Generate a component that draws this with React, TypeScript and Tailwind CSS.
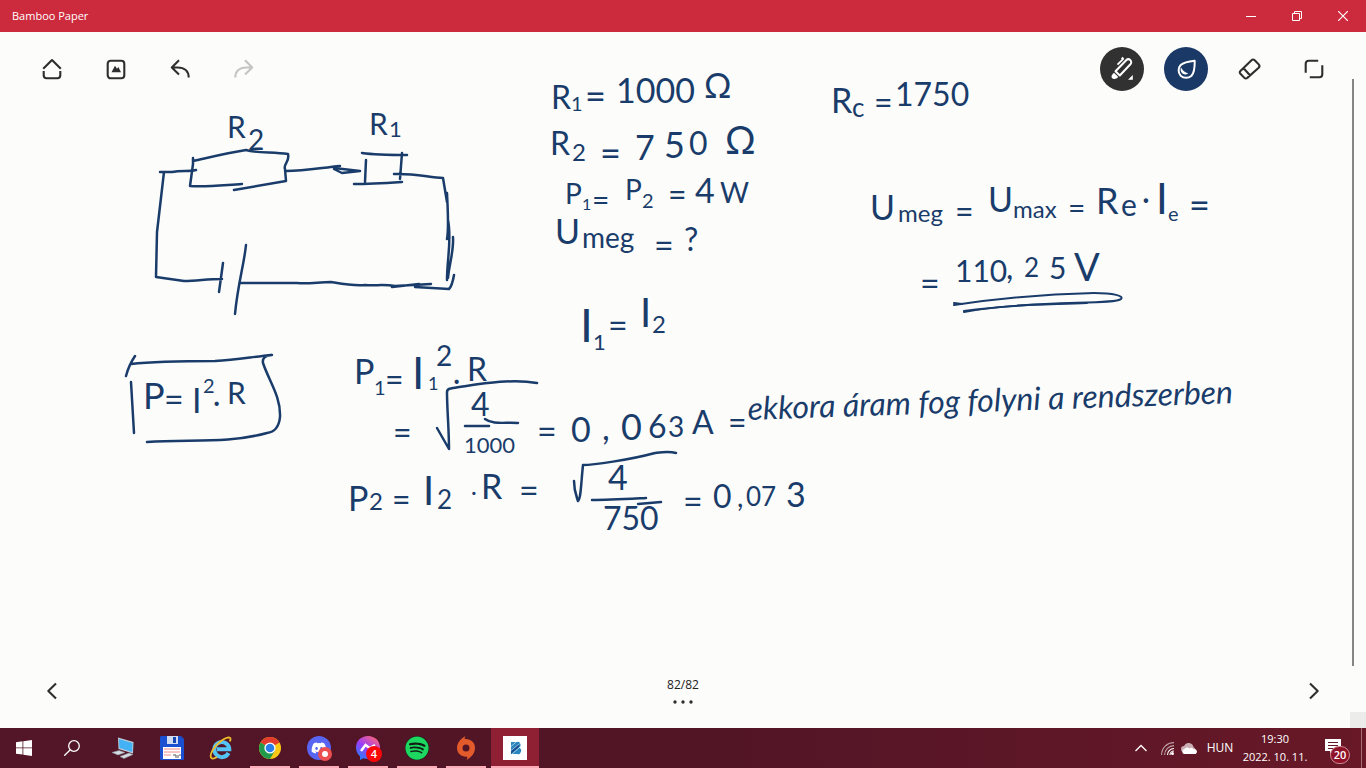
import type { ReactNode } from "react";
import { FaDiscord, FaSpotify } from "react-icons/fa";

type Mark = [x: number, y: number, size: number, text: string];

// One entry per handwritten line, each mark placed on the free canvas.
const notes: Mark[][] = [
  [[227, 138, 30, "R"], [248, 150, 28, "2"]],
  [[369, 135, 30, "R"], [389, 137, 22, "1"]],

  [[551, 109, 32, "R"], [571, 111, 20, "1"], [585, 109, 36, "="], [616, 103, 34, "1000"], [704, 98, 34, "Ω"]],
  [[550, 155, 32, "R"], [572, 161, 24, "2"], [600, 166, 36, "="], [635, 160, 34, "7"], [664, 158, 36, "5"], [689, 155, 32, "0"], [725, 154, 38, "Ω"]],
  [[565, 204, 28, "P"], [582, 210, 16, "1"], [592, 211, 30, "="], [625, 200, 28, "P"], [642, 208, 20, "2"], [668, 206, 32, "="], [695, 203, 34, "4"], [720, 203, 28, "W"]],
  [[555, 244, 34, "U"], [582, 248, 28, "meg"], [654, 258, 34, "="], [684, 251, 32, "?"]],
  [[580, 342, 46, "I"], [593, 350, 22, "1"], [608, 338, 34, "="], [640, 327, 40, "I"], [652, 333, 24, "2"]],

  [[831, 113, 34, "R"], [852, 117, 26, "c"], [874, 114, 32, "="], [895, 106, 32, "1750"]],
  [[870, 220, 34, "U"], [898, 222, 24, "meg"], [955, 223, 32, "="], [988, 212, 34, "U"], [1013, 218, 24, "max"], [1068, 219, 30, "="], [1096, 214, 36, "R"], [1121, 216, 30, "e"], [1142, 210, 30, "·"], [1156, 214, 42, "I"], [1168, 221, 20, "e"], [1189, 218, 36, "="]],
  [[920, 296, 34, "="], [955, 282, 30, "110"], [1006, 279, 32, ","], [1024, 277, 26, "2"], [1049, 279, 30, "5"], [1074, 281, 38, "V"]],

  [[143, 409, 36, "P"], [164, 412, 34, "="], [192, 413, 34, "I"], [203, 393, 20, "2"], [213, 412, 28, "·"], [227, 404, 30, "R"]],

  [[354, 384, 34, "P"], [374, 395, 20, "1"], [385, 391, 32, "="], [412, 389, 44, "I"], [428, 390, 18, "1"], [436, 366, 28, "2"], [453, 390, 28, "·"], [467, 381, 32, "R"]],
  [[393, 444, 32, "="], [471, 416, 32, "4"], [464, 453, 22, "1000"], [537, 444, 34, "="], [571, 442, 34, "0"], [602, 440, 34, ","], [621, 440, 36, "0"], [648, 438, 32, "6"], [668, 437, 28, "3"], [692, 434, 32, "A"], [728, 434, 32, "="]],
  [[348, 511, 34, "P"], [369, 510, 24, "2"], [392, 511, 32, "="], [423, 505, 40, "I"], [437, 509, 26, "2"], [471, 500, 22, "·"], [481, 499, 34, "R"], [519, 503, 34, "="], [608, 490, 34, "4"], [603, 530, 32, "750"], [683, 514, 34, "="], [713, 508, 32, "0"], [737, 507, 28, ","], [746, 506, 26, "07"], [786, 507, 34, "3"]],
];

const strokes = [
  // circuit
  "M193 158v6l-3 22c18 1 34-1 52-2M193 161c18-4 34-8 53-11 10 3 26 2 42 4 2 8-5 10-3 15l1 12-52 9",
  "M160 172h12c10-2 16 0 24-2M164 172l-7 60-1 45 28 4c14 0 22-2 38-2M223 263l-4 29",
  "M246 245c-2 20-8 38-11 69M241 283c18 0 36 0 56 0 12 1 22-1 34-1 12 2 22 4 34 3 10 1 18-1 30 1l36-2M392 287l27-3M415 287l34 2c3-3 4-8 5-14",
  "M286 171c18 0 34-3 54-5M334 168l26 3-18 2-8-4M362 153c14 2 28 2 45 2M366 160l-1 22M354 184c16 0 32-1 48-2M402 153l-2 26M394 174c18-1 34 3 49 4l4 24M447 193c1 22 2 36 0 46M448 220c4 20-1 38-1 60M453 237c1 14-4 28-5 41",
  // frame around the power formula
  "M126 376c2-8 5-14 9-20M131 364c26-3 52-3 84-3 22-1 36-4 57-6-6 0-10 3-9 8 6 18 18 34 17 54-1 10-5 15-13 16-40 11-76 6-120 9M131 382l3 51",
  // square roots and fraction bars
  "M437 428l12 21c0-20-2-40-2-57 0-4 3-3 6-4 22-3 56-10 84-5M465 426h24M485 419c8 6 20 3 33 4",
  "M574 481c0 10 2 14 4 20 3-2 3-18 5-36 10 0 46-5 72-12 8-1 14-2 21 0M592 500c16 0 34-1 54-2M638 504l23-2",
];

const thinStrokes = [
  "M954 305c40-6 88-11 140-12 20 0 30 3 27 6-6 6-80 1-157 12",
  "M954 303l8 1M964 312c44-8 80-7 123-9",
];

function Ink() {
  return (
    <svg
      viewBox="0 32 1366 696"
      className="absolute inset-0 w-full h-full pointer-events-none font-['Lato','Open_Sans',sans-serif]"
      fill="none"
      stroke="#1a3c6a"
      strokeLinecap="round"
      strokeLinejoin="round"
    >
      {strokes.map((d) => (
        <path key={d} d={d} strokeWidth="2.5" />
      ))}
      {thinStrokes.map((d) => (
        <path key={d} d={d} strokeWidth="2" />
      ))}
      <g fill="#1a3c6a" stroke="none">
        {notes.map((line, i) => (
          <text key={i}>
            {line.map(([x, y, size, text]) => (
              <tspan key={`${x}-${y}`} x={x} y={y} fontSize={size}>
                {text}
              </tspan>
            ))}
          </text>
        ))}
        <text x="748" y="420" fontSize="32" fontStyle="italic" transform="rotate(-2 748 420)">
          ekkora áram fog folyni a rendszerben
        </text>
      </g>
    </svg>
  );
}

function ToolButton({ label, className = "", children }: { label: string; className?: string; children: ReactNode }) {
  return (
    <button aria-label={label} className={`w-11 h-11 rounded-full flex items-center justify-center ${className}`}>
      {children}
    </button>
  );
}

function LineIcon({ children, color = "#2e2e2e" }: { children: ReactNode; color?: string }) {
  return (
    <svg width="24" height="24" viewBox="0 0 24 24" fill="none" stroke={color} strokeWidth="2.1" strokeLinejoin="round">
      {children}
    </svg>
  );
}

function Toolbar() {
  return (
    <div className="flex justify-between px-[30px] pt-[15px]">
      <div className="flex gap-5">
        <ToolButton label="Home">
          <LineIcon>
            <path d="M3.2 11.8 12 3l8.8 8.8M3.7 14v4.2a3 3 0 0 0 3 3h10.6a3 3 0 0 0 3-3V14" />
          </LineIcon>
        </ToolButton>
        <ToolButton label="Insert picture">
          <LineIcon>
            <rect x="3.7" y="3.7" width="16.6" height="17.6" rx="3" />
            <path d="m7.5 15.2 3.5-6.4 2 3 1.4-1.8 2.600 5.200z" fill="#2e2e2e" stroke="none" />
          </LineIcon>
        </ToolButton>
        <ToolButton label="Undo">
          <LineIcon>
            <path d="M11 3.3 3.8 10.5l7.2 7M4 10.500h5.500c7.500 0 11.200 4.200 11.200 10" />
          </LineIcon>
        </ToolButton>
        <ToolButton label="Redo">
          <LineIcon color="#c4c4c4">
            <path d="m13 3.3 7.200 7.200-7.200 7M20 10.500h-5.500c-7.500 0-11.200 4.200-11.200 10" />
          </LineIcon>
        </ToolButton>
      </div>
      <div className="flex gap-5">
        <ToolButton label="Pen" className="bg-[#313131]">
          <svg width="44" height="44" viewBox="0 0 44 44" fill="none" stroke="#fff" strokeWidth="2" strokeLinejoin="round">
            <path d="M15.500 24.300 26.200 13.200a2.900 2.900 0 0 1 4.200 4.100L19.800 28.500z" />
            <path d="m17.500 17.700 6.300-6.400M21.500 12l1.700-1.600" strokeWidth="1.700" />
            <path d="m14 25.800 4.300 4.300c-1.600 1.700-3.700 2.300-5.300 1.600-1.900-.8-2.300-3.200 1-5.900z" fill="#fff" stroke="none" />
            <path d="M28 32.800l4.800-4.800v4.800z" fill="#fff" stroke="none" />
          </svg>
        </ToolButton>
        <ToolButton label="Color" className="bg-[#1a3966]">
          <svg width="44" height="44" viewBox="0 0 44 44" fill="none" stroke="#fff" strokeWidth="2" strokeLinejoin="round">
            <path d="M30.700 13.700c-6 .6-11.300 1.800-14 4.300a7.900 7.900 0 0 0 0 10.700 7.900 7.900 0 0 0 10.800 0c2.500-2.700 3.300-8.500 3.200-15z" />
            <path d="M17 20.500c-1.400 3.300.8 6.700 4.200 6.900 1.300 0 2.300-.4 3-1-3.200-.8-5.700-2.900-7.200-5.900z" fill="#fff" stroke="none" />
          </svg>
        </ToolButton>
        <ToolButton label="Eraser">
          <LineIcon>
            <path d="M13.500 3.200a2.400 2.400 0 0 1 3.200 0l4 4.200a2.400 2.400 0 0 1 0 3.300L9.300 20.900a2 2 0 0 1-2.900 0l-4-4.100a2 2 0 0 1 0-2.900zM5.400 11l6.500 7.200" />
          </LineIcon>
        </ToolButton>
        <ToolButton label="Full screen">
          <LineIcon>
            <path d="M3.700 15.800V6.700a3 3 0 0 1 3-3h9.500M20.300 8.200v9.100a3 3 0 0 1-3 3H7.800" />
          </LineIcon>
        </ToolButton>
      </div>
    </div>
  );
}

function TitleBar() {
  return (
    <header className="h-8 shrink-0 bg-[#cc2b3d] text-white flex items-center justify-between">
      <h1 className="text-[11px] pl-3">Bamboo Paper</h1>
      <div className="flex h-full">
        <button aria-label="Minimize" className="w-[46px] flex items-center justify-center">
          <svg width="10" height="10" stroke="#fff">
            <path d="M0 5.500h10" />
          </svg>
        </button>
        <button aria-label="Restore" className="w-[46px] flex items-center justify-center">
          <svg width="10" height="10" fill="none" stroke="#fff">
            <path d="M.5 2.500h7v7h-7zM2.500 2V.5h7v7H8" />
          </svg>
        </button>
        <button aria-label="Close" className="w-[46px] flex items-center justify-center">
          <svg width="10" height="10" stroke="#fff" strokeWidth="1.200">
            <path d="m0 0 10 10M10 0 0 10" />
          </svg>
        </button>
      </div>
    </header>
  );
}

function PageNav() {
  return (
    <div className="mt-auto flex items-center justify-between px-[30px] pb-[15px]">
      <ToolButton label="Previous page">
        <LineIcon>
          <path d="M16 4.500 8.300 12l7.700 7.500" />
        </LineIcon>
      </ToolButton>
      <button aria-label="Page overview" className="flex flex-col items-center gap-1.5 text-[#222]">
        <span className="text-xs">82/82</span>
        <svg width="22" height="6" fill="#2e2e2e">
          <circle cx="3" cy="3" r="1.700" />
          <circle cx="11" cy="3" r="1.700" />
          <circle cx="19" cy="3" r="1.700" />
        </svg>
      </button>
      <ToolButton label="Next page">
        <LineIcon>
          <path d="m8 4.500 7.700 7.500L8 19.500" />
        </LineIcon>
      </ToolButton>
    </div>
  );
}

/* ── Taskbar ─────────────────────────────────────────── */

const apps: { name: string; state?: "open" | "active"; icon: ReactNode }[] = [
  {
    name: "Remote computer",
    icon: (
      <svg width="24" height="24" viewBox="0 0 24 24">
        <path d="m7 1.500 15.500 4.500-.5 11.500L7.500 13z" fill="#c3cdd8" />
        <path d="m8 3 13.600 4-.4 9L8.400 12z" fill="#42b2f5" />
        <path d="m1 16.500 7-2 6 2-7 2.500zM9 20.500l9-3.500 4 1.500-9 4z" fill="#d5dbe2" stroke="#8d97a3" strokeWidth=".6" />
      </svg>
    ),
  },
  {
    name: "Total Commander",
    icon: (
      <svg width="24" height="24" viewBox="0 0 24 24">
        <path d="M1 0h20l3 3v20a1 1 0 0 1-1 1H1a1 1 0 0 1-1-1V1z" fill="#1a4fd0" />
        <path d="M7 0h11v8H7z" fill="#cfdcf0" />
        <path d="M13 1h3v6h-3z" fill="#1a45b8" />
        <path d="M3 11h18v12H3z" fill="#fff" />
        <path d="M4 13h16M4 16h16M4 19h7" stroke="#ef8a8a" />
        <path d="M13 19h3v3m2-3v3m1-3h2" stroke="#333" fill="none" strokeWidth=".8" />
      </svg>
    ),
  },
  {
    name: "Internet Explorer",
    icon: (
      <svg width="24" height="24" viewBox="0 0 24 24" fill="none">
        <path d="M19.500 17A7.500 7.500 0 1 1 20.300 13.300H8" stroke="#54c4f5" strokeWidth="4" />
        <path d="M3 22.500C-1 20 5 10 12 5c5-3.500 9-4.500 9.500-2.500.3 1-.3 2-.8 3" stroke="#efbd28" strokeWidth="1.800" />
        <path d="M3 22.500c1.500.5 3.500-.5 5-1.500" stroke="#efbd28" strokeWidth="1.800" />
      </svg>
    ),
  },
  {
    name: "Google Chrome",
    state: "open",
    icon: (
      <svg width="24" height="24" viewBox="0 0 24 24">
        <circle cx="12" cy="12" r="11" fill="#fbc816" />
        <path d="M12 12 2.500 6.500A11 11 0 0 1 21.500 6.500z" fill="#e33b2e" />
        <path d="M2.500 6.500A11 11 0 0 0 12 23l5-8.500L12 12z" fill="#229a4c" />
        <circle cx="12" cy="12" r="5.600" fill="#fff" />
        <circle cx="12" cy="12" r="4.300" fill="#2b7de9" />
      </svg>
    ),
  },
  {
    name: "Discord",
    state: "open",
    icon: (
      <span className="relative w-6 h-6 rounded-full bg-[#5865f2] flex items-center justify-center">
        <FaDiscord size={16} color="#fff" />
        <svg width="14" height="14" className="absolute -right-px -bottom-px">
          <circle cx="7" cy="7" r="7" fill="#ed4f50" />
          <circle cx="7" cy="7" r="3" fill="#fff" />
        </svg>
      </span>
    ),
  },
  {
    name: "Messenger",
    state: "open",
    icon: (
      <span className="relative w-6 h-6">
        <svg width="24" height="24" viewBox="0 0 24 24">
          <defs>
            <linearGradient id="messenger" x1=".1" y1="1" x2=".8" y2="0">
              <stop offset="0" stopColor="#1688ff" />
              <stop offset=".5" stopColor="#9b3dfb" />
              <stop offset="1" stopColor="#ff6578" />
            </linearGradient>
          </defs>
          <path d="M12 0C5 0 0 5 0 11.600c0 3.500 1.400 6.500 4 8.700V24l3.500-1.700c1.400.5 3 .7 4.500.7 7 0 12-4.800 12-11.400S19 0 12 0z" fill="url(#messenger)" />
          <path d="m5 15 4.500-6 4 3 5.500-3" stroke="#fff" strokeWidth="2.400" fill="none" />
        </svg>
        <span className="absolute left-2.5 top-2.5 w-4 h-4 rounded-full bg-[#fa0808] text-white text-[11px] leading-4 font-semibold text-center">
          4
        </span>
      </span>
    ),
  },
  {
    name: "Spotify",
    state: "open",
    icon: (
      <span className="rounded-full bg-[#101c14]">
        <FaSpotify size={24} color="#1ed760" />
      </span>
    ),
  },
  {
    name: "Origin",
    state: "open",
    icon: (
      <svg width="24" height="24" viewBox="0 0 24 24">
        <path
          fillRule="evenodd"
          d="M11.500 0c-.8 1.200-1 2-.7 3.100C16.500 2.600 21 6.500 21 12c0 5.500-4 9.500-8.500 12 .8-1.400 1-2.200.7-3.300C7.500 21.200 3 17.500 3 12 3 6.500 7 2.500 11.500 0zM12 8.500a3.500 3.500 0 1 0 0 7 3.500 3.500 0 0 0 0-7z"
          fill="#e35a2b"
        />
      </svg>
    ),
  },
  {
    name: "Bamboo Paper",
    state: "active",
    icon: (
      <svg width="24" height="24" viewBox="0 0 24 24">
        <path d="M0 0h24v24H0z" fill="#fff" />
        <path d="M8 6h6a2.800 2.800 0 0 1 1.500 5.400A3.200 3.200 0 0 1 14 18H8z" fill="#2a86bd" />
        <path d="M8 14l8-7v4l-8 7z" fill="#1a4f92" />
        <path d="M8 10.500 13 6M8 14.500 16.500 7.500M9 18l7.500-6.500" stroke="#bfe6f2" strokeWidth=".8" />
      </svg>
    ),
  },
];

function Taskbar() {
  return (
    <footer className="h-10 shrink-0 flex justify-between bg-linear-to-r from-[#521628] via-[#511526] to-[#681827] text-white">
      <div className="flex">
        <button aria-label="Start" className="w-12 flex items-center justify-center">
          <svg width="16" height="16" viewBox="0 0 16 16" fill="#fff">
            <path d="M0 2.200 6.500 1.300v6.200H0zM7.300 1.200 16 0v7.500H7.300zM0 8.300h6.500v6.300L0 13.700zM7.300 8.300H16V16l-8.700-1.200z" />
          </svg>
        </button>
        <button aria-label="Search" className="w-12 flex items-center justify-center">
          <svg width="16" height="16" viewBox="0 0 16 16" fill="none" stroke="#fff" strokeWidth="1.300">
            <circle cx="10" cy="6" r="5.300" />
            <path d="m6.300 9.700-6 6" />
          </svg>
        </button>
        <div className="flex gap-px pl-[3px]">
          {apps.map((app) => (
            <button
              key={app.name}
              aria-label={app.name}
              className={`relative w-12 flex items-center justify-center ${app.state === "active" ? "bg-[#8f2033]" : ""}`}
            >
              {app.icon}
              {app.state && (
                <span className={`absolute bottom-0 h-0.5 bg-[#fbacb8] ${app.state === "active" ? "inset-x-0" : "inset-x-1"}`} />
              )}
            </button>
          ))}
        </div>
      </div>

      <div className="flex items-center text-xs">
        <button aria-label="Hidden icons" className="w-6 h-full flex items-center justify-center">
          <svg width="12" height="8" fill="none" stroke="#fff" strokeWidth="1.300">
            <path d="m.5 7 5.500-5.500L11.500 7" />
          </svg>
        </button>
        <button aria-label="Network" className="w-7 h-full flex items-center justify-center">
          <svg width="13" height="13" fill="none" stroke="#fff" strokeWidth="1.100">
            <path d="M.6 13C.6 6 6 .6 13 .6M3.600 13C3.600 7.800 7.800 3.600 13 3.600" opacity=".6" />
            <path d="M6.500 13c0-3.600 2.900-6.500 6.500-6.500M9 13c0-2.200 1.800-4 4-4" />
            <circle cx="11.500" cy="11.500" r="1.500" fill="#fff" stroke="none" />
          </svg>
        </button>
        <button aria-label="OneDrive" className="w-4 h-full flex items-center justify-center">
          <svg width="16" height="11" viewBox="0 0 16 11">
            <path d="M3 9a3 3 0 0 1 0-6 5 5 0 0 1 9.500 1A3.500 3.500 0 0 1 13 10z" fill="#cbaeb4" />
            <path d="M3 11a2.600 2.600 0 0 1 .5-5c1-1.500 3.500-2 5-.5 1-1 3-1 3.500.5 5-.5 5 5 1.500 5z" fill="#fff" />
          </svg>
        </button>
        <button className="w-11 h-full pl-0.5">HUN</button>
        <button className="w-[68px] h-full text-[11px] leading-[18px] whitespace-nowrap flex flex-col items-center justify-center">
          <span>19:30</span>
          <span>2022. 10. 11.</span>
        </button>
        <button aria-label="Notifications" className="relative w-[52px] h-full flex items-center justify-center pr-1 pb-1">
          <svg width="16" height="17" viewBox="0 0 16 17">
            <path d="M0 1h16v12H8l-3 3v-3H0z" fill="#fff" />
            <path d="M3 4.500h10M3 7.500h10M3 10.500h6" stroke="#661828" />
          </svg>
          <span className="absolute left-[21px] top-[18px] w-5 h-[18px] rounded-full border border-[#c98a94] bg-[#8f1229] text-[11px] leading-4 font-semibold text-center">
            20
          </span>
        </button>
        <span className="w-[5px] h-full border-l border-[#a36d78]" />
      </div>
    </footer>
  );
}

export default function App() {
  return (
    <div className="h-screen flex flex-col overflow-hidden select-none font-['Open_Sans','Noto_Sans',sans-serif]">
      <TitleBar />
      <main className="relative flex-1 min-h-0 flex flex-col bg-[#fcfcfb]">
        <Ink />
        <Toolbar />
        <PageNav />
        {/* scroll thumb and resize corner over the page */}
        <div className="absolute right-3 top-[47px] bottom-[62px] w-0.5 bg-[#858585]" />
        <div className="absolute right-0 bottom-0 w-4 h-4 bg-[#ececeb]" />
      </main>
      <Taskbar />
    </div>
  );
}
